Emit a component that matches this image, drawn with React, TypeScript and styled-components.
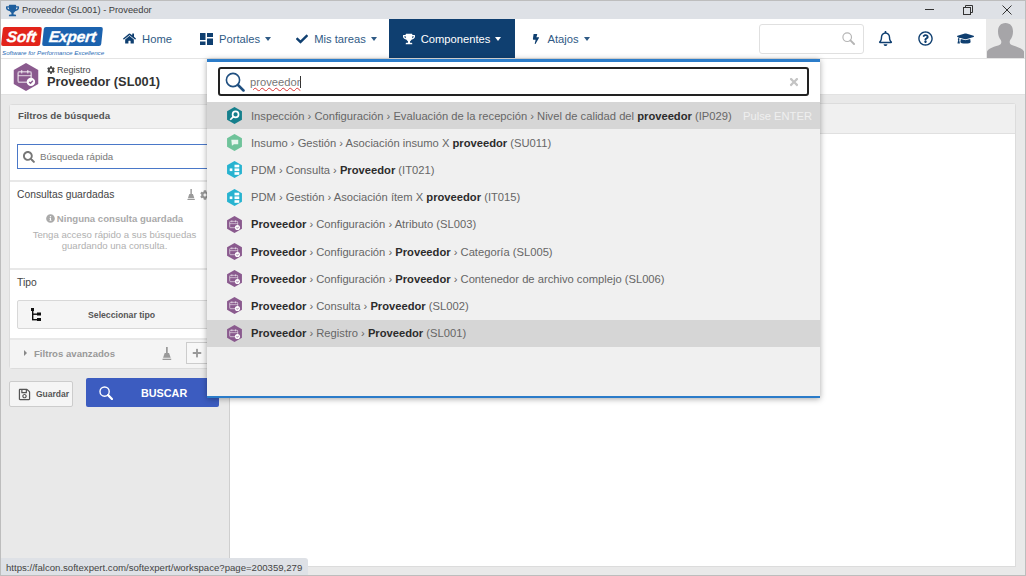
import React from 'react';
import styled, { createGlobalStyle } from 'styled-components';
import {
    FaBolt,
    FaCheck,
    FaGraduationCap,
    FaHome,
    FaInfoCircle,
    FaPlus,
    FaRegBell,
    FaRegQuestionCircle,
    FaRegSave,
    FaSearch,
    FaTimes,
    FaTrophy,
    FaCog,
} from 'react-icons/fa';

const NAVY = '#0f3f70';

const GlobalStyle = createGlobalStyle`
    * {
        box-sizing: border-box;
    }
    html, body {
        margin: 0;
        height: 100%;
        overflow: hidden;
    }
    body {
        font-family: "Liberation Sans", Arial, sans-serif;
        font-size: 11.2px;
        color: #333;
    }
    #root {
        height: 100%;
    }
`;

const Page = styled.div`
    position: relative;
    width: 1026px;
    height: 576px;
    border: 1px solid #bdbdbd;
    display: flex;
    flex-direction: column;
    overflow: hidden;
    background: #e9e9e9;
`;

const TitleBar = styled.div`
    height: 18px;
    flex: none;
    background: #dee1e6;
    display: flex;
    align-items: center;
    padding-left: 5px;
    font-size: 9.3px;
    color: #3c3c3c;
    gap: 3px;
`;

const TitleText = styled.span`
    flex: 1;
`;

const WindowButton = styled.div`
    width: 36px;
    height: 18px;
    display: flex;
    align-items: center;
    justify-content: center;
    color: #333;
`;

const NavBar = styled.div`
    height: 40px;
    flex: none;
    background: #fff;
    display: flex;
    align-items: stretch;
    border-bottom: 1px solid #e4e4e4;
`;

const Logo = styled.div`
    width: 107px;
    flex: none;
    padding: 8px 0 0 1px;
`;

const LogoMark = styled.div`
    display: flex;
    gap: 2px;
    height: 19px;
    transform: skewX(-6deg);
`;

const LogoPart = styled.div<{ $bg: string; $w: number }>`
    width: ${p => p.$w}px;
    background: ${p => p.$bg};
    color: #fff;
    border-radius: 2px;
    font: italic bold 15.5px/19px "Liberation Sans", sans-serif;
    -webkit-text-stroke: 0.3px #fff;
    text-align: center;
    letter-spacing: -0.2px;
`;

const LogoTag = styled.div`
    font: italic 6.2px/9px "Liberation Sans", sans-serif;
    color: #2a6db5;
    white-space: nowrap;
    margin-top: 2px;
`;

const NavItem = styled.div<{ $active?: boolean; $w: number }>`
    position: relative;
    width: ${p => p.$w}px;
    flex: none;
    display: flex;
    align-items: center;
    justify-content: center;
    gap: 6px;
    font-size: 11.2px;
    color: ${p => (p.$active ? '#fff' : '#2f5a85')};
    background: ${p => (p.$active ? NAVY : 'transparent')};
    svg {
        color: ${p => (p.$active ? '#fff' : NAVY)};
        flex: none;
    }
`;

const Caret = styled.span`
    display: inline-block;
    width: 0;
    height: 0;
    margin-left: -1px;
    border-left: 3.5px solid transparent;
    border-right: 3.5px solid transparent;
    border-top: 4px solid currentColor;
`;

const NavSpacer = styled.div`
    flex: 1;
`;

const NavSearch = styled.div`
    width: 105px;
    height: 30px;
    align-self: center;
    border: 1px solid #e0e0e0;
    border-radius: 3px;
    display: flex;
    align-items: center;
    justify-content: flex-end;
    padding-right: 8px;
`;

const NavIcon = styled.div<{ $w: number }>`
    width: ${p => p.$w}px;
    flex: none;
    display: flex;
    align-items: center;
    justify-content: center;
    color: ${NAVY};
`;

const Avatar = styled.div`
    width: 39px;
    flex: none;
    background: #e9e9e9;
    display: flex;
    align-items: flex-end;
`;

const PageHeader = styled.div`
    height: 36px;
    flex: none;
    background: #fff;
    display: flex;
    align-items: center;
    padding-left: 11px;
    gap: 7px;
    border-bottom: 1px solid #e2e2e2;
`;

const Crumb = styled.div`
    font-size: 9px;
    line-height: 10px;
    color: #444;
    display: flex;
    align-items: center;
    gap: 2px;
    margin-top: 1px;
`;

const PageTitle = styled.div`
    font-size: 12.8px;
    line-height: 14px;
    font-weight: bold;
    color: #333;
`;

const Body = styled.div`
    flex: 1;
    display: flex;
    min-height: 0;
`;

const Sidebar = styled.div`
    width: 229px;
    flex: none;
    padding: 9px 9px 0 8px;
    border-right: 1px solid #cfcfcf;
`;

const FilterPanel = styled.div`
    height: 265px;
    border: 1px solid #dcdcdc;
    border-radius: 3px;
    background: #fff;
    display: flex;
    flex-direction: column;
`;

const PanelHeader = styled.div`
    height: 24px;
    flex: none;
    background: #f1f1f1;
    border-bottom: 1px solid #e2e2e2;
    padding: 0 8px 2px;
    display: flex;
    align-items: center;
    font-size: 9.7px;
    font-weight: bold;
    color: #555;
`;

const QuickSection = styled.div`
    height: 53px;
    flex: none;
    padding: 15px 5px 0 7px;
    border-bottom: 2px solid #e8e8e8;
`;

const QuickInput = styled.div`
    height: 25px;
    border: 1px solid #4a78c8;
    display: flex;
    align-items: center;
    padding-left: 5px;
    gap: 5px;
    font-size: 9.7px;
    color: #777;
    svg {
        color: #777;
    }
`;

const Section = styled.div<{ $h: number }>`
    height: ${p => p.$h}px;
    flex: none;
    padding: 6px 7px 0;
    border-bottom: 2px solid #e8e8e8;
`;

const SectionTitle = styled.div`
    font-size: 10.3px;
    line-height: 13px;
    color: #444;
    display: flex;
    justify-content: space-between;
`;

const SectionTools = styled.div`
    display: flex;
    align-items: center;
    gap: 5px;
    color: #999;
    margin-right: 2px;
`;

const EmptyNote = styled.div`
    text-align: center;
    margin-top: 12px;
    font-size: 9.6px;
    line-height: 11px;
    color: #b0b0b0;
`;

const EmptyTitle = styled.div`
    font-weight: bold;
    margin-bottom: 5px;
    color: #aaa;
    display: flex;
    align-items: center;
    justify-content: center;
    gap: 2px;
`;

const TypeButton = styled.div`
    height: 29px;
    margin-top: 11px;
    border: 1px solid #d8d8d8;
    border-radius: 2px;
    background: #f5f5f5;
    display: flex;
    align-items: center;
    padding-left: 13px;
    font-size: 8.7px;
    font-weight: bold;
    color: #555;
`;

const TypeLabel = styled.span`
    margin-left: 46px;
`;

const AdvancedRow = styled.div`
    flex: 1;
    background: #f4f4f4;
    display: flex;
    align-items: center;
    padding: 0 0 2px 14px;
    font-size: 9.6px;
    font-weight: bold;
    color: #999;
    gap: 7px;
`;

const TriangleRight = styled.span`
    width: 0;
    height: 0;
    border-top: 3px solid transparent;
    border-bottom: 3px solid transparent;
    border-left: 3px solid #888;
`;

const AdvancedTools = styled.div`
    margin-left: auto;
    display: flex;
    align-items: center;
    gap: 14px;
    color: #999;
`;

const PlusButton = styled.div`
    width: 33px;
    height: 22px;
    padding-right: 11px;
    border: 1px solid #ccc;
    display: flex;
    align-items: center;
    justify-content: center;
    background: #f7f7f7;
`;

const ActionRow = styled.div`
    margin-top: 9px;
    display: flex;
    align-items: center;
    gap: 13px;
`;

const SaveButton = styled.div`
    width: 64px;
    height: 26px;
    margin-top: 3px;
    border: 1px solid #ccc;
    border-radius: 2px;
    background: #f5f5f5;
    display: flex;
    align-items: center;
    padding-left: 8px;
    gap: 5px;
    font-size: 8.5px;
    font-weight: bold;
    color: #555;
    svg {
        color: #555;
        flex: none;
    }
`;

const SearchButton = styled.div`
    width: 133px;
    height: 29px;
    flex: none;
    border-radius: 2px;
    background: #3c5cc0;
    color: #fff;
    display: flex;
    align-items: center;
    padding-left: 13px;
    font-size: 10.8px;
    font-weight: bold;
`;

const SearchLabel = styled.span`
    margin-left: 28px;
`;

const Main = styled.div`
    flex: 1;
    padding: 8px 9px 8px 0;
    display: flex;
`;

const MainPanel = styled.div`
    flex: 1;
    background: #fff;
    border: 1px solid #dcdcdc;
    border-left: none;
    border-radius: 0 3px 0 0;
`;

const MainStrip = styled.div`
    height: 30px;
    background: #f0f0f0;
    border-bottom: 1px solid #e0e0e0;
`;

const Dropdown = styled.div`
    position: absolute;
    left: 206px;
    top: 58px;
    width: 613px;
    height: 339px;
    background: #f0f0f0;
    border-top: 3px solid #2b7cc9;
    border-bottom: 2px solid #2b7cc9;
    box-shadow: 0 1px 6px rgba(0, 0, 0, 0.35);
`;

const SearchBox = styled.div`
    height: 40px;
    background: #fff;
    padding: 5px 11px 0;
`;

const SearchField = styled.div`
    height: 29px;
    border: 2px solid #222;
    border-radius: 3px;
    display: flex;
    align-items: center;
    padding: 0 7px 0 5px;
    gap: 5px;
    font-size: 11.2px;
    color: #777;
    > svg:last-child {
        color: #c4c4c4;
    }
`;

const TypedText = styled.span`
    flex: 1;
`;

const Squiggle = styled.span`
    text-decoration: underline wavy #d33;
    text-decoration-thickness: 1px;
    border-right: 1px solid #333;
`;

const ResultList = styled.div`
    display: flex;
    flex-direction: column;
`;

const ResultRow = styled.div<{ $selected?: boolean }>`
    height: 27.2px;
    display: flex;
    align-items: center;
    padding-left: 19px;
    gap: 8px;
    background: ${p => (p.$selected ? '#d6d6d6' : 'transparent')};
    font-size: 11.2px;
    color: #666;
    white-space: nowrap;
    b {
        color: #2c2c2c;
    }
`;

const ResultText = styled.span`
    flex: 1;
`;

const EnterHint = styled.span`
    color: #efefef;
    margin-right: 8px;
`;

const StatusTip = styled.div`
    position: absolute;
    left: -1px;
    bottom: -1px;
    height: 18px;
    padding: 0 6px;
    display: flex;
    align-items: center;
    background: #dee1e6;
    border-radius: 0 3px 0 0;
    font-size: 9.6px;
    color: #444;
`;

type HexProps = { color: string; kind: 'module' | 'search' | 'cart' | 'tree'; size?: number };

// hexagon badge used for every module icon
const HexIcon: React.FC<HexProps> = ({ color, kind, size = 17 }) => (
    <svg width={size} height={size} viewBox="0 0 16 16" style={{ flex: 'none' }}>
        <polygon points="8,0 15,4 15,12 8,16 1,12 1,4" fill={color} />
        {kind === 'module' && (
            <g>
                <rect x="3.5" y="5" width="7.500" height="6" rx="0.8" fill="none" stroke="#fff" strokeOpacity="0.6" strokeWidth="0.9" />
                <path d="M5.5 4v2M9 4v2M3.500 7.200h7.500" stroke="#fff" strokeOpacity="0.6" strokeWidth="0.8" />
                <circle cx="10.8" cy="10.8" r="2.4" fill="#fff" />
                <path d="M9.8 10.8l.8.8 1.3-1.4" stroke={color} strokeWidth="0.8" fill="none" />
            </g>
        )}
        {kind === 'search' && (
            <g fill="none" stroke="#fff" strokeWidth="1.6">
                <circle cx="9" cy="7" r="2.8" />
                <path d="M7 9l-3 3" />
            </g>
        )}
        {kind === 'cart' && (
            <path d="M5 5.500h6.500v4.200H7.500L5.600 11z" fill="#e8f6ee" />
        )}
        {kind === 'tree' && (
            <g fill="#fff">
                <rect x="3.5" y="7" width="2.5" height="2.5" />
                <rect x="8" y="3.5" width="4.5" height="2.5" />
                <rect x="8" y="7" width="4.5" height="2.5" />
                <rect x="8" y="10.5" width="4.5" height="2.5" />
            </g>
        )}
    </svg>
);

const Magnifier: React.FC<{ size: number; color: string; ring?: number }> = ({ size, color, ring = 1.6 }) => (
    <svg width={size} height={size} viewBox="0 0 20 20" fill="none" stroke={color} style={{ flex: 'none' }}>
        <circle cx="8" cy="8" r="6.6" strokeWidth={ring} />
        <path d="M13 13l5.500 5.500" strokeWidth={ring * 1.6} strokeLinecap="round" />
    </svg>
);

const Broom: React.FC<{ size: number }> = ({ size }) => (
    <svg width={size * 0.75} height={size} viewBox="0 0 9 12" fill="#9a9a9a" style={{ flex: 'none' }}>
        <rect x="3.700" y="0" width="1.600" height="6" />
        <path d="M2.500 5.500h4L8 10H1z" />
        <rect x="0.500" y="10.800" width="8" height="1.200" />
    </svg>
);

const PortalIcon = () => (
    <svg width="13" height="12" viewBox="0 0 13 12" fill={NAVY}>
        <rect x="0" y="0" width="5.5" height="7" />
        <rect x="7" y="0" width="6" height="4" />
        <rect x="0" y="8.5" width="5.5" height="3.5" />
        <rect x="7" y="5.5" width="6" height="6.5" />
    </svg>
);

const TreeIcon = () => (
    <svg width="11" height="14" viewBox="0 0 11 14" fill="#111">
        <rect x="0" y="0" width="3" height="3" />
        <rect x="1" y="2" width="1.4" height="10" />
        <rect x="1" y="5.5" width="6" height="1.4" />
        <rect x="1" y="11" width="6" height="1.4" />
        <rect x="6" y="4.5" width="4" height="3" />
        <rect x="6" y="10" width="4" height="3" />
    </svg>
);

const RestoreIcon = () => (
    <svg width="10" height="10" viewBox="0 0 10 10" fill="none" stroke="#333">
        <rect x="0.5" y="2.5" width="7" height="7" />
        <path d="M2.5 2.5V0.5h7v7H7.5" />
    </svg>
);

const CloseIcon = () => (
    <svg width="10" height="10" viewBox="0 0 10 10" stroke="#333" strokeWidth="1">
        <path d="M0.5 0.5l9 9M9.5 0.5l-9 9" />
    </svg>
);

const Silhouette = () => (
    <svg width="39" height="36" viewBox="0 0 39 36" fill="#a6a5a8">
        <path d="M19.5 1c-5 0-7.500 3.500-7.500 8.500 0 3.500 1 6.500 2.800 8.500.7 1 .7 3 0 4-1.500 2-12 3-13.800 7.500V36h37v-6.500c-1.800-4.500-12.300-5.500-13.800-7.500-.7-1-.7-3 0-4 1.800-2 2.800-5 2.800-8.500C27 4.500 24.500 1 19.500 1z" />
    </svg>
);

const results: { icon: HexProps; text: React.ReactNode; hint?: boolean; selected?: boolean }[] = [
    {
        icon: { color: '#157f8c', kind: 'search' },
        text: <>Inspección › Configuración › Evaluación de la recepción › Nivel de calidad del <b>proveedor</b> (IP029)</>,
        hint: true,
        selected: true,
    },
    {
        icon: { color: '#6fc39a', kind: 'cart' },
        text: <>Insumo › Gestión › Asociación insumo X <b>proveedor</b> (SU011)</>,
    },
    {
        icon: { color: '#27b3d0', kind: 'tree' },
        text: <>PDM › Consulta › <b>Proveedor</b> (IT021)</>,
    },
    {
        icon: { color: '#27b3d0', kind: 'tree' },
        text: <>PDM › Gestión › Asociación ítem X <b>proveedor</b> (IT015)</>,
    },
    {
        icon: { color: '#8a5a8e', kind: 'module' },
        text: <><b>Proveedor</b> › Configuración › Atributo (SL003)</>,
    },
    {
        icon: { color: '#8a5a8e', kind: 'module' },
        text: <><b>Proveedor</b> › Configuración › <b>Proveedor</b> › Categoría (SL005)</>,
    },
    {
        icon: { color: '#8a5a8e', kind: 'module' },
        text: <><b>Proveedor</b> › Configuración › <b>Proveedor</b> › Contenedor de archivo complejo (SL006)</>,
    },
    {
        icon: { color: '#8a5a8e', kind: 'module' },
        text: <><b>Proveedor</b> › Consulta › <b>Proveedor</b> (SL002)</>,
    },
    {
        icon: { color: '#8a5a8e', kind: 'module' },
        text: <><b>Proveedor</b> › Registro › <b>Proveedor</b> (SL001)</>,
        selected: true,
    },
];

export default function App() {
    return (
        <Page>
            <GlobalStyle />
            <TitleBar>
                <FaTrophy size={13} color="#1f5f9e" />
                <TitleText>Proveedor (SL001) - Proveedor</TitleText>
                <WindowButton>
                    <svg width="9" height="2"><rect width="9" height="1" fill="#333" /></svg>
                </WindowButton>
                <WindowButton><RestoreIcon /></WindowButton>
                <WindowButton><CloseIcon /></WindowButton>
            </TitleBar>

            <NavBar>
                <Logo>
                    <LogoMark>
                        <LogoPart $bg="#e2231a" $w={39}>Soft</LogoPart>
                        <LogoPart $bg="#1b62ae" $w={59}>Expert</LogoPart>
                    </LogoMark>
                    <LogoTag>Software for Performance Excellence</LogoTag>
                </Logo>
                <NavItem $w={79}><FaHome size={13} /> Home</NavItem>
                <NavItem $w={97}><PortalIcon /> Portales <Caret /></NavItem>
                <NavItem $w={105}><FaCheck size={12} /> Mis tareas <Caret /></NavItem>
                <NavItem $active $w={126}><FaTrophy size={12} /> Componentes <Caret /></NavItem>
                <NavItem $w={91}><FaBolt size={10} /> Atajos <Caret /></NavItem>
                <NavSpacer />
                <NavSearch><Magnifier size={13} color="#b5b5b5" ring={1.8} /></NavSearch>
                <NavIcon $w={42}><FaRegBell size={15} /></NavIcon>
                <NavIcon $w={38}><FaRegQuestionCircle size={15} /></NavIcon>
                <NavIcon $w={42}><FaGraduationCap size={17} /></NavIcon>
                <Avatar><Silhouette /></Avatar>
            </NavBar>

            <PageHeader>
                <HexIcon color="#8a5a8e" kind="module" size={28} />
                <div>
                    <Crumb><FaCog size={8} /> Registro</Crumb>
                    <PageTitle>Proveedor (SL001)</PageTitle>
                </div>
            </PageHeader>

            <Body>
                <Sidebar>
                    <FilterPanel>
                        <PanelHeader>Filtros de búsqueda</PanelHeader>
                        <QuickSection>
                            <QuickInput><FaSearch size={12} /> Búsqueda rápida</QuickInput>
                        </QuickSection>
                        <Section $h={88}>
                            <SectionTitle>
                                Consultas guardadas
                                <SectionTools><Broom size={11} /><FaCog size={10} /></SectionTools>
                            </SectionTitle>
                            <EmptyNote>
                                <EmptyTitle><FaInfoCircle size={9} /> Ninguna consulta guardada</EmptyTitle>
                                Tenga acceso rápido a sus búsquedas<br />guardando una consulta.
                            </EmptyNote>
                        </Section>
                        <Section $h={70}>
                            <SectionTitle>Tipo</SectionTitle>
                            <TypeButton><TreeIcon /><TypeLabel>Seleccionar tipo</TypeLabel></TypeButton>
                        </Section>
                        <AdvancedRow>
                            <TriangleRight />
                            Filtros avanzados
                            <AdvancedTools>
                                <Broom size={13} />
                                <PlusButton><FaPlus size={10} /></PlusButton>
                            </AdvancedTools>
                        </AdvancedRow>
                    </FilterPanel>
                    <ActionRow>
                        <SaveButton><FaRegSave size={13} /> Guardar</SaveButton>
                        <SearchButton><Magnifier size={14} color="#fff" ring={2} /><SearchLabel>BUSCAR</SearchLabel></SearchButton>
                    </ActionRow>
                </Sidebar>
                <Main>
                    <MainPanel>
                        <MainStrip />
                    </MainPanel>
                </Main>
            </Body>

            <Dropdown>
                <SearchBox>
                    <SearchField>
                        <Magnifier size={20} color="#1f4f80" />
                        <TypedText><Squiggle>proveedor</Squiggle></TypedText>
                        <FaTimes size={12} />
                    </SearchField>
                </SearchBox>
                <ResultList>
                    {results.map((r, i) => (
                        <ResultRow key={i} $selected={r.selected}>
                            <HexIcon {...r.icon} />
                            <ResultText>{r.text}</ResultText>
                            {r.hint && <EnterHint>Pulse ENTER</EnterHint>}
                        </ResultRow>
                    ))}
                </ResultList>
            </Dropdown>

            <StatusTip>https://falcon.softexpert.com/softexpert/workspace?page=200359,279</StatusTip>
        </Page>
    );
}
